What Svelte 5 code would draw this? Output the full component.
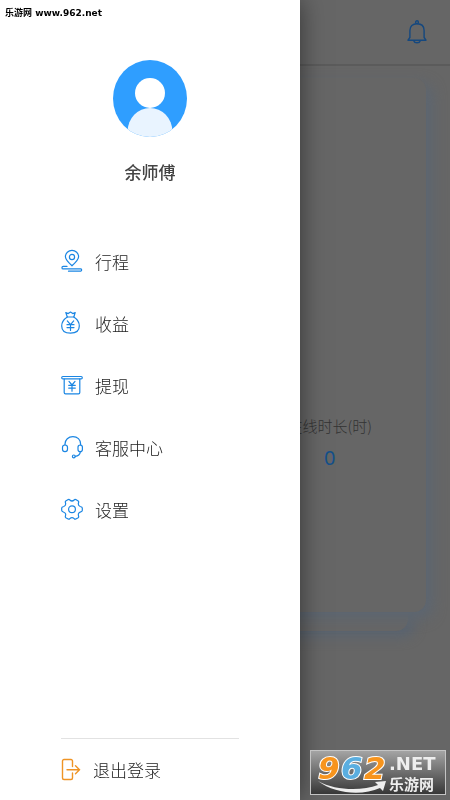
<script>
  let items = [
    { icon: "trip", label: "行程" },
    { icon: "income", label: "收益" },
    { icon: "withdraw", label: "提现" },
    { icon: "service", label: "客服中心" },
    { icon: "settings", label: "设置" },
  ];
  let name = "余师傅";
  let hours = 0;
</script>

<div class="page">
  <header>
    <button class="bell" aria-label="消息">
      <svg width="20" height="24" viewBox="0 0 20 24">
        <circle cx="10" cy="2.2" r="1.4" />
        <path d="M2.9 17.5V10.5C2.9 6.4 5.6 3.8 10 3.8S17.1 6.4 17.1 10.5V17.5L19 20.2H1Z" />
        <path d="M6.7 20.7C7.6 23.5 12.4 23.5 13.3 20.7" />
      </svg>
    </button>
  </header>
  <main>
    <section class="card">
      <div class="stat">
        <span>在线时长(时)</span>
        <strong>{hours}</strong>
      </div>
    </section>
    <div class="card-under"></div>
  </main>
</div>

<aside>
  <div class="profile">
    <svg width="74" height="77" viewBox="0 0 74 77">
      <defs>
        <clipPath id="face"><ellipse cx="37" cy="38.5" rx="37" ry="38.5" /></clipPath>
      </defs>
      <g clip-path="url(#face)">
        <rect width="74" height="77" fill="#2f9eff" />
        <ellipse cx="37" cy="71" rx="22.3" ry="23" fill="#e9f4ff" />
        <circle cx="37" cy="33" r="15" fill="#fff" />
      </g>
    </svg>
    <h1>{name}</h1>
  </div>

  <nav>
    {#each items as item}
      <a href="#{item.icon}">
        <svg width="22" height="24" viewBox="0 0 22 24">
          {#if item.icon == "trip"}
            <path d="M11 15.8C7 12.2 4.4 9.8 4.4 6.8A6.6 6.4 0 0 1 17.6 6.8C17.6 9.8 15 12.2 11 15.8Z" />
            <circle cx="11" cy="7" r="2.6" />
            <path d="M6 16.4H2.2A1.1 1.1 0 0 0 2.2 18.9H19.8A1.2 1.2 0 0 1 19.8 21.2H7.5" />
          {:else if item.icon == "income"}
            <path d="M6.3 5L4.8 .6L7.2 1.6L9.5 .1L11.8 1.6L14.2 .6L12.8 5Z" />
            <path d="M6.3 5C2.8 7.3 .7 10.5 .7 13.9C.7 18.7 3.8 21.1 9.5 21.1S18.3 18.7 18.3 13.9C18.3 10.5 16.3 7.3 12.8 5" />
            <path d="M6.3 8.9L9.5 12.6L12.7 8.9M9.5 12.6V18.5M6 12.7H13M6 15.6H13" />
          {:else if item.icon == "withdraw"}
            <rect x=".7" y="2.5" width="20.6" height="2.4" rx="1.2" />
            <path d="M3.2 5V18.6A1.3 1.3 0 0 0 4.5 19.9H17.5A1.3 1.3 0 0 0 18.8 18.6V5" />
            <path d="M8 7.4L11 11L14 7.4M11 11V17.2M7.7 11.3H14.3M7.7 14.1H14.3" />
          {:else if item.icon == "service"}
            <path d="M4 9V8C4 3.7 7.4 .6 11.9 .6S19.6 3.7 19.6 8V9" />
            <rect x="1.5" y="9" width="5" height="6.6" rx="2.4" />
            <rect x="17" y="9" width="4.4" height="6.6" rx="2.2" />
            <path d="M19.4 15.7C19 18.5 17.3 20.1 14.2 20.3" />
            <circle cx="12.8" cy="20.4" r="1.4" />
          {:else}
            <path d="M7.2 1.6Q8.2 1.1 8.8 2Q11 4 13.2 2Q13.8 1.1 14.8 1.6L17.2 3Q17.9 3.5 17.6 4.5Q16.6 7.6 19.2 8.5Q21.3 9 21.3 10V12.6Q21.3 13.6 19.2 14.2Q16.6 15 17.6 18.2Q17.9 19.2 17.2 19.7L14.8 21Q13.8 21.5 13.2 20.6Q11 18.6 8.8 20.6Q8.2 21.5 7.2 21L4.8 19.7Q4.1 19.2 4.4 18.2Q5.4 15 2.8 14.2Q.7 13.6 .7 12.6V10Q.7 9 2.8 8.5Q5.4 7.6 4.4 4.5Q4.1 3.5 4.8 3Z" />
            <circle cx="11" cy="11.3" r="3.4" />
          {/if}
        </svg>
        {item.label}
      </a>
    {/each}
  </nav>

  <button class="logout">
    <svg width="20" height="24" viewBox="0 0 20 24">
      <path d="M11.5 8.5V3A1.5 1.5 0 0 0 10 1.5H3A1.5 1.5 0 0 0 1.5 3V20A1.5 1.5 0 0 0 3 21.5H10A1.5 1.5 0 0 0 11.5 20V15M6 11.8H18.4M14.5 7.8L18.5 11.8L14.5 15.8" />
    </svg>
    退出登录
  </button>
</aside>

<div class="site">乐游网 www.962.net</div>

<svg class="stamp" width="136" height="45" viewBox="0 0 136 45">
  <defs>
    <linearGradient id="plate" x2="0" y2="1">
      <stop offset="0" stop-color="#a5a5a5" />
      <stop offset="1" stop-color="#363636" />
    </linearGradient>
  </defs>
  <rect x=".5" y=".5" width="135" height="44" fill="url(#plate)" stroke="#c4c4c4" />
  <path d="M8 31C26 41 52 41 68 35L65 32L76 31L73 41L70 38C52 46 25 44 8 31Z" fill="#eee" />
  <g class="digits">
    <text x="8" y="29" fill="#f7941d">9</text>
    <text x="31" y="29" fill="#5aaee0">6</text>
    <text x="54" y="29" fill="#f7941d">2</text>
  </g>
  <text class="net" x="79" y="20">.NET</text>
  <text class="cn" x="79" y="40">乐游网</text>
</svg>

<style>
  :global(body) {
    margin: 0;
    background: #666;
    font-family: "Noto Sans CJK SC", sans-serif;
  }

  svg {
    display: block;
    flex: none;
    fill: none;
  }

  button {
    border: 0;
    padding: 0;
    background: none;
    font-family: inherit;
  }

  .page {
    display: flex;
    flex-direction: column;
    min-height: 100vh;
  }

  header {
    display: flex;
    align-items: center;
    justify-content: flex-end;
    height: 64px;
    padding-right: 23px;
    border-bottom: 2px solid #5b5b5b;
  }

  .bell svg {
    stroke: #15487f;
    stroke-width: 1.4;
    stroke-linejoin: round;
  }

  main {
    flex: 1;
    display: flex;
    flex-direction: column;
    padding: 12px 24px 169px;
  }

  .card {
    flex: 1;
    display: flex;
    align-items: flex-end;
    justify-content: flex-end;
    position: relative;
    z-index: 1;
    padding: 0 54px 138px 0;
    border-radius: 12px;
    background: #666;
    box-shadow: 6px 6px 14px #5c6672;
  }

  .card-under {
    height: 19px;
    margin: 0 18px;
    border-radius: 0 0 12px 12px;
    background: #666;
    box-shadow: 6px 6px 12px #5a6470;
  }

  .stat {
    display: flex;
    flex-direction: column;
    align-items: center;
    color: #333;
    font-size: 15px;
    font-weight: 300;
    line-height: 20px;
  }

  .stat strong {
    margin-top: 6px;
    color: #14508a;
    font-family: "Noto Sans", sans-serif;
    font-size: 20px;
    font-weight: 400;
    line-height: 32px;
  }

  aside {
    position: fixed;
    z-index: 2;
    top: 0;
    bottom: 0;
    left: 0;
    display: flex;
    flex-direction: column;
    box-sizing: border-box;
    width: calc(100% * 2 / 3);
    background: #fff;
    box-shadow: 0 0 24px rgba(0, 0, 0, 0.5);
  }

  .profile {
    display: flex;
    flex-direction: column;
    align-items: center;
    gap: 22px;
    padding: 60px 0 47px;
  }

  h1 {
    margin: 0;
    color: #444;
    font-size: 17px;
    font-weight: 500;
    line-height: 25px;
  }

  nav {
    flex: 1;
  }

  nav a,
  .logout {
    display: flex;
    align-items: center;
    gap: 12px;
    height: 62px;
    color: #222;
    font-size: 17px;
    font-weight: 300;
    line-height: 24px;
    text-decoration: none;
  }

  nav a {
    margin-left: 61px;
  }

  nav svg {
    stroke: #1b86e3;
    stroke-width: 1.2;
    stroke-linejoin: round;
    stroke-linecap: round;
    overflow: visible;
  }

  .logout {
    margin: 0 61px;
    border-top: 1px solid #e2e2e2;
  }

  .logout svg {
    stroke: #ef9425;
    stroke-width: 1.4;
    stroke-linecap: round;
  }

  .site {
    position: fixed;
    z-index: 3;
    top: 6px;
    left: 5px;
    color: #000;
    font-family: "DejaVu Sans", "Noto Sans CJK SC", sans-serif;
    font-size: 9px;
    font-weight: 700;
    line-height: 14px;
  }

  .stamp {
    position: fixed;
    z-index: 3;
    right: 4px;
    bottom: 5px;
  }

  .digits {
    font: italic 700 31px "DejaVu Sans", sans-serif;
    stroke: #fff;
    stroke-width: 2;
    paint-order: stroke;
  }

  .net {
    fill: #eee;
    font: 700 18px "DejaVu Sans", sans-serif;
  }

  .cn {
    fill: #eee;
    font-size: 15px;
    font-weight: 700;
  }
</style>
